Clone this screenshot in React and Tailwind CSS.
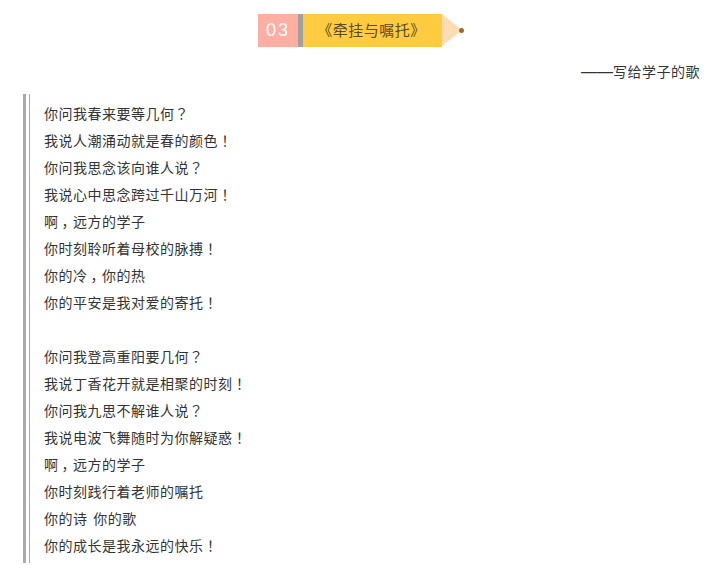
const stanzas = [
  ["你问我春来要等几何？","我说人潮涌动就是春的颜色！","你问我思念该向谁人说？","我说心中思念跨过千山万河！","啊，远方的学子","你时刻聆听着母校的脉搏！","你的冷，你的热","你的平安是我对爱的寄托！"],
  ["你问我登高重阳要几何？","我说丁香花开就是相聚的时刻！","你问我九思不解谁人说？","我说电波飞舞随时为你解疑惑！","啊，远方的学子","你时刻践行着老师的嘱托","你的诗 你的歌","你的成长是我永远的快乐！"],
];
function Line({ text }) {
  return (
    <p className="[word-spacing:2px]">
      {text.split(/([，！？])/).map((part, i) =>
        part === "，" ? (
          <span key={i} className="pl-[3px] tracking-[-2.5px]">{part}</span>
        ) : part === "！" || part === "？" ? (
          <span key={i} className="font-['Noto_Sans_CJK_TC',sans-serif]">{part}</span>
        ) : (
          part
        )
      )}
    </p>
  );
}
export default function App() {
  return (
    <div className="w-[717px] h-[576px] bg-white overflow-hidden text-[#333] font-['Noto_Sans_CJK_SC',sans-serif]">
      <div className="flex justify-center pt-[14px] pl-[3px]">
        <div className="flex h-[33px] items-stretch">
          <div className="w-[40px] bg-[#ffaea3] text-white text-[18px] tracking-[2px] flex items-center justify-center font-['Liberation_Sans',sans-serif]">03</div>
          <div className="w-[5px] bg-[#a0a0a0]" />
          <div className="w-[139px] bg-[#ffcb40] text-[15px] text-[#5b4a1c] flex items-center justify-center tracking-[0.5px] pr-[2px]">《牵挂与嘱托》</div>
          <div className="relative w-[20px]">
            <div className="w-0 h-0 border-l-[20px] border-l-[#ffdcb4] border-y-[16.5px] border-y-transparent" />
            <div className="absolute left-[17px] top-[14px] w-[5px] h-[5px] rounded-full bg-[#a5672e]" />
          </div>
        </div>
      </div>
      <div className="text-right text-[14px] leading-[27px] pr-[17px] mt-[11px] tracking-[0.5px]">
        <span className="font-['Liberation_Sans',sans-serif] text-[16px] tracking-normal">——</span>写给学子的歌
      </div>
      <div className="ml-[23px] mt-[9px] border-l-[3px] border-[#aaa] pl-[3px] h-[469px]">
        <div className="border-l border-[#aaa] pl-[14px] pt-[6px] h-full text-[14px] leading-[27px] tracking-[0.5px]">
          {stanzas.map((s, i) => (
            <div key={i} className={i ? "mt-[27px]" : ""}>
              {s.map((l, j) => <Line key={j} text={l} />)}
            </div>
          ))}
        </div>
      </div>
    </div>
  );
}
